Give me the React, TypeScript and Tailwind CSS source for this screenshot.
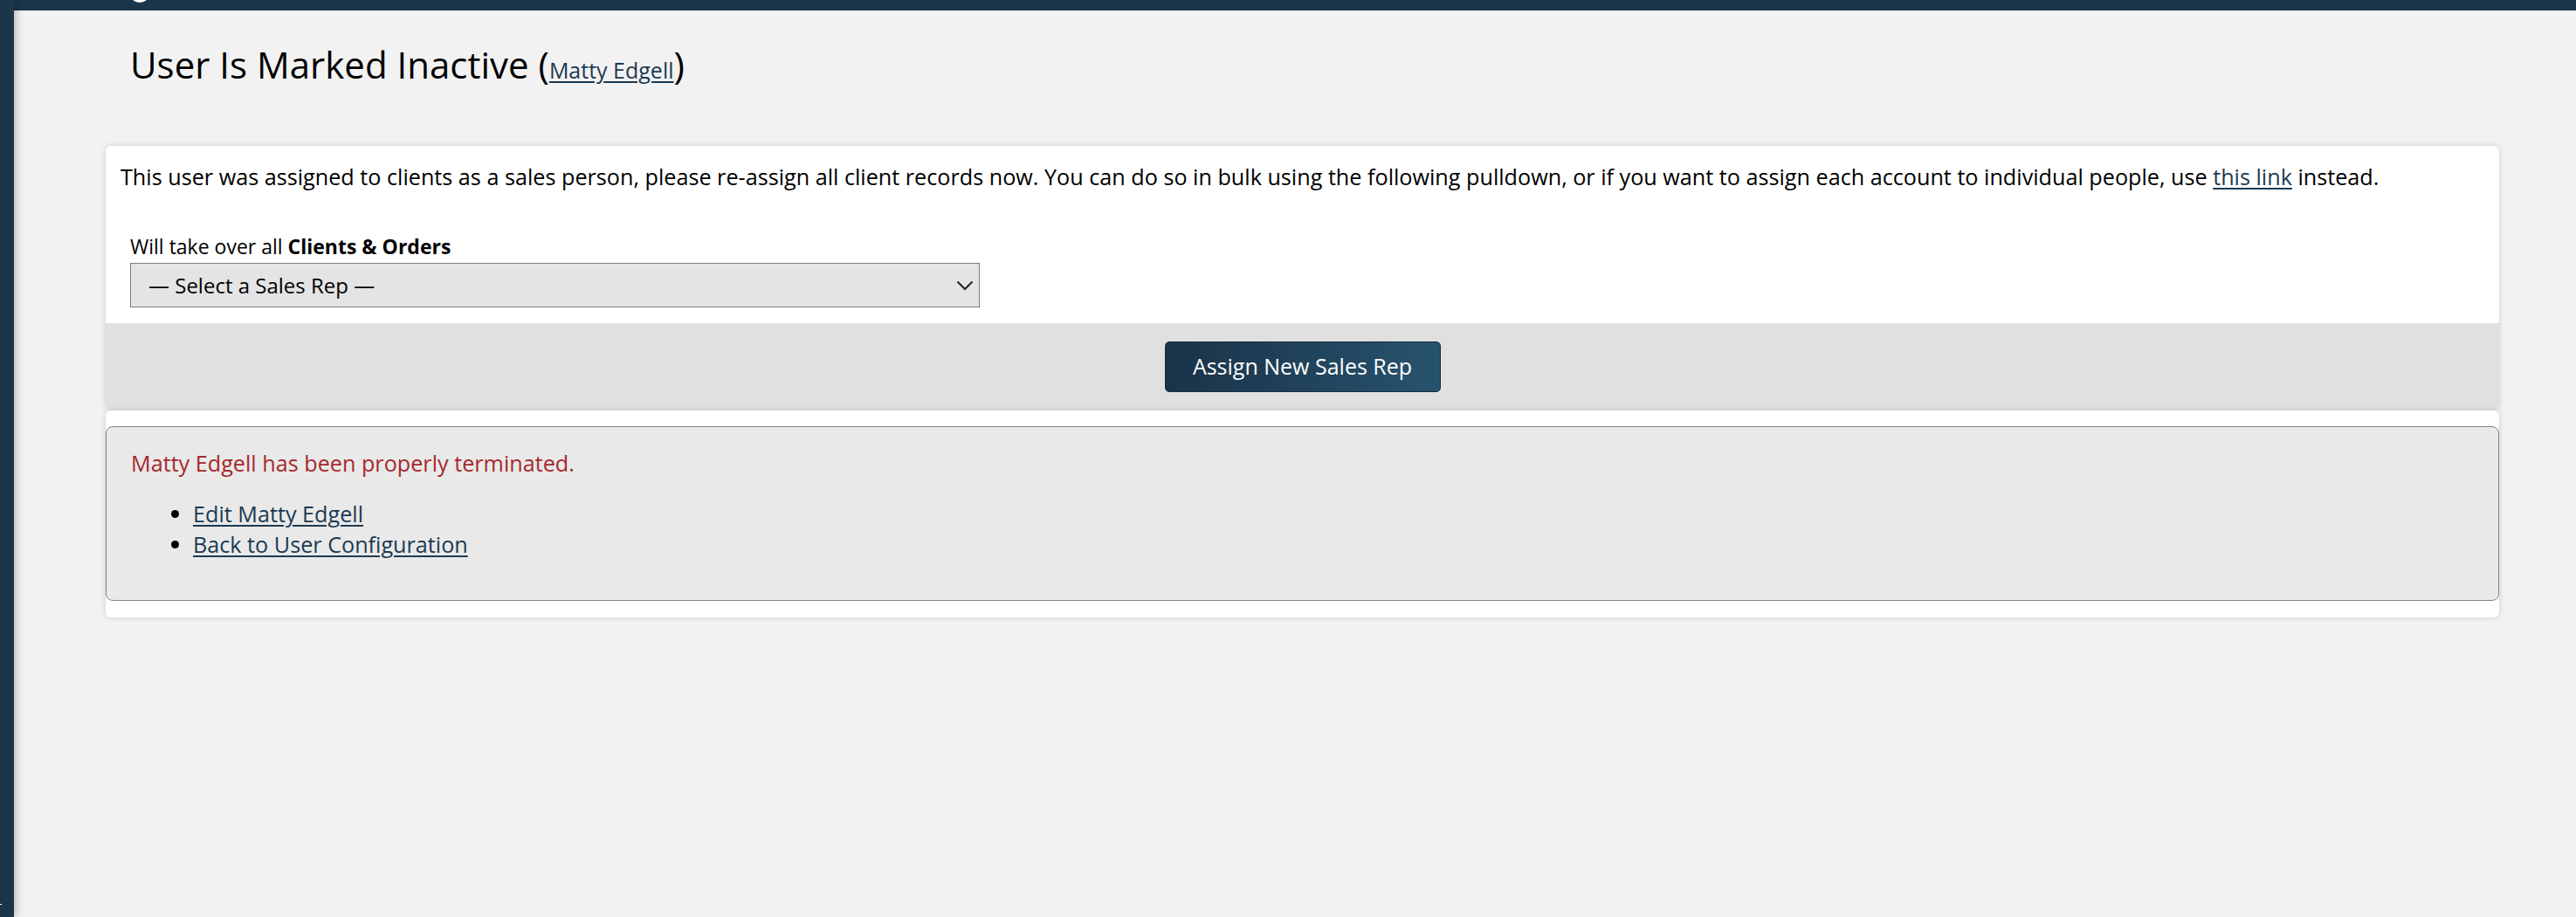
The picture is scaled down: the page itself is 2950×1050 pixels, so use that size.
import React from 'react';

const linkCls = 'text-[#1b3a52] underline underline-offset-[3px] decoration-[1.5px]';

const App: React.FC = () => {
    return (
        <div className="w-full h-[1050px] flex bg-[#f2f2f2] font-['Open_Sans',sans-serif] text-black overflow-hidden">
            {/* Left rail */}
            <div className="w-[16px] h-full bg-[#1b354b] flex flex-col justify-end z-10 shadow-[3px_0_10px_rgba(0,0,0,0.22)]">
                <div className="w-[2px] h-[1px] bg-white mb-[14px]" />
            </div>

            <div className="flex-1 flex flex-col min-w-0">
                {/* Top bar */}
                <div className="h-[12px] bg-[#1b354b] overflow-hidden flex items-end">
                    <div className="ml-[132px] w-[24px] h-[24px] shrink-0 rounded-full border-[3px] border-white mb-[9px]" />
                </div>

                <div className="pl-[105px] pr-[88px]">
                    {/* Heading */}
                    <h1 className="mt-[33px] pl-[28px] text-[42px] leading-[57px] font-normal">
                        User Is Marked Inactive (<a href="#" className={`${linkCls} text-[25px] leading-none`}>Matty Edgell</a>)
                    </h1>

                    {/* Reassign card */}
                    <div className="mt-[65px] bg-white rounded-[6px] overflow-hidden shadow-[0_0_6px_rgba(0,0,0,0.16)]">
                        <div className="pt-[17px] pl-[17px] pr-[17px] pb-[18px]">
                            <p className="text-[25.2px] leading-[36px]">
                                This user was assigned to clients as a sales person, please re-assign all client records now. You can do so in bulk using the following pulldown, or if you want to assign each account to individual people, use <a href="#" className={linkCls}>this link</a> instead.
                            </p>
                            <div className="mt-[46px] pl-[11px]">
                                <div className="text-[23px] leading-[33px]">
                                    Will take over all <span className="font-bold">Clients &amp; Orders</span>
                                </div>
                                <div className="mt-[2px] w-[973px] h-[51px] bg-[#e4e4e4] border border-[#7c7c7c] flex items-center justify-between pl-[20px] pr-[6px] text-[24px]">
                                    <span>— Select a Sales Rep —</span>
                                    <svg width="20" height="12" viewBox="0 0 20 12" fill="none">
                                        <path d="M1.5 1.5 L10 10 L18.5 1.5" stroke="#222" strokeWidth="2" />
                                    </svg>
                                </div>
                            </div>
                        </div>
                        <div className="h-[99px] bg-[#e0e0e0] flex items-center justify-center">
                            <button className="w-[316px] h-[58px] rounded-[5px] bg-gradient-to-r from-[#1a3348] to-[#27536f] text-white text-[25px] border border-[#163044]">
                                Assign New Sales Rep
                            </button>
                        </div>
                    </div>

                    {/* Result card */}
                    <div className="mt-[1px] bg-white rounded-[6px] pt-[18px] pb-[19px] shadow-[0_0_6px_rgba(0,0,0,0.16)]">
                        <div className="bg-[#e9e9e9] border border-[#858585] rounded-[8px] pl-[28px] pt-[25px] pb-[46px]">
                            <div className="text-[25.2px] leading-[33px] text-[#a6282b]">
                                Matty Edgell has been properly terminated.
                            </div>
                            <ul className="mt-[24px] list-disc pl-[71px] text-[25.2px] leading-[35px]">
                                <li><a href="#" className={linkCls}>Edit Matty Edgell</a></li>
                                <li><a href="#" className={linkCls}>Back to User Configuration</a></li>
                            </ul>
                        </div>
                    </div>
                </div>
            </div>
        </div>
    );
};

export default App;
